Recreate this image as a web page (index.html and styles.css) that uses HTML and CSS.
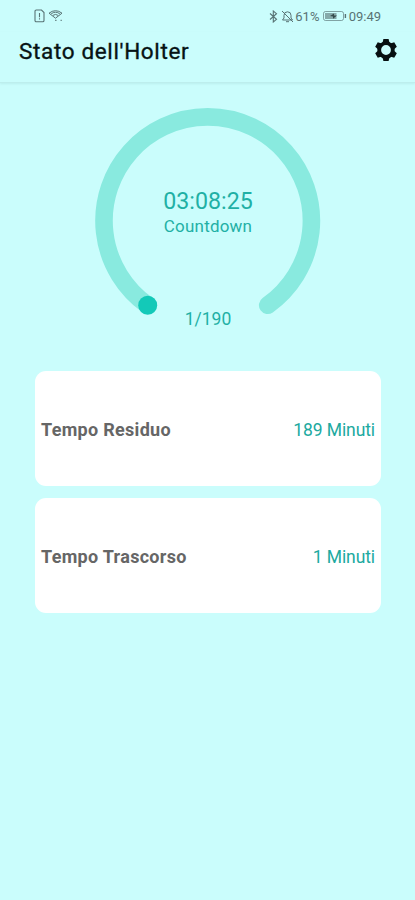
FILE: index.html
```html
<!DOCTYPE html>
<html lang="it">
<head>
<meta charset="utf-8">
<title>Stato dell'Holter</title>
<link rel="stylesheet" href="styles.css">
</head>
<body>
<div class="status">
  <svg class="sim" width="11" height="14" viewBox="0 0 11 14" fill="none" stroke="currentColor" stroke-width="1.1"><path d="M3 1h4.5L10 3.5V11.5a1.3 1.3 0 0 1-1.3 1.3H2.3A1.3 1.3 0 0 1 1 11.5V2.3A1.3 1.3 0 0 1 2.3 1z"/><path d="M5.5 4v4.2M5.5 9.3v1.3"/></svg>
  <svg class="wifi" width="16" height="14" viewBox="0 0 16 14" fill="none" stroke="currentColor" stroke-width="1"><path d="M1 4.2Q7.5-.8 14 4.2L7.5 9.2zM3.2 4.8Q7.5 1.6 11.8 4.8M4.8 6.4q2.7-1.9 5.4 0"/><path d="M7 11.3h1.6M12.5 11.3h1.4"/></svg>
  <span class="space"></span>
  <svg class="bt" width="9" height="13" viewBox="0 0 9 13" fill="none" stroke="currentColor" stroke-width="1.1"><path d="M1 3.5l6.5 5.8-3.2 2.7V1l3.2 2.7L1 9.5"/></svg>
  <svg class="bell" width="13" height="13" viewBox="0 0 13 13" fill="none" stroke="currentColor" stroke-width="1"><path d="M1.5 10h10L10 8V5.3a3.5 3.5 0 0 0-7 0V8zM5 11.7h3M1 1l11 11"/></svg>
  <span class="pct">61%</span>
  <svg class="battery" width="24" height="10" viewBox="0 0 24 10"><rect x=".5" y=".5" width="20" height="9" rx="2" fill="none" stroke="currentColor" opacity=".65"/><rect x="2" y="2" width="11.5" height="6" fill="currentColor" opacity=".6"/><path d="M7 5l4-2.5v2h3L10 7.8V5.5z" fill="#344b4c"/><path d="M22.4 3v4" stroke="currentColor" stroke-width="1.4"/></svg>
  <span class="clock">09:49</span>
</div>
<header class="bar">
  <h1>Stato dell'Holter</h1>
  <svg class="gear" width="24" height="24" viewBox="-12 -12 24 24">
    <circle r="6.8" fill="none" stroke="#071011" stroke-width="3.8"/>
    <g fill="#071011"><path id="tooth" d="M-2.6-11h5.2l.9 4h-7z"/><use href="#tooth" transform="rotate(60)"/><use href="#tooth" transform="rotate(120)"/><use href="#tooth" transform="rotate(180)"/><use href="#tooth" transform="rotate(240)"/><use href="#tooth" transform="rotate(300)"/></g>
  </svg>
</header>
<main>
  <section class="gauge">
    <svg class="ring" width="226" height="226" viewBox="0 0 226 226"><path d="M52.7 197.2A103.7 103.7 0 1 1 172.7 197.2" fill="none" stroke="#89eadf" stroke-width="17.6" stroke-linecap="round"/><circle cx="52.7" cy="197.2" r="9.5" fill="#13c9b8"/></svg>
    <div class="readout">
      <span class="time">03:08:25</span>
      <span class="label">Countdown</span>
      <span class="count">1/190</span>
    </div>
  </section>
  <section class="cards">
    <div class="card"><b>Tempo Residuo</b><span>189 Minuti</span></div>
    <div class="card"><b>Tempo Trascorso</b><span>1 Minuti</span></div>
  </section>
</main>
</body>
</html>
```
FILE: styles.css
```css
* { box-sizing: border-box; }
body {
  margin: 0;
  height: 900px;
  background: #cafdfc;
  font-family: Roboto, "Liberation Sans", sans-serif;
  overflow: hidden;
}
.status {
  display: flex;
  align-items: center;
  height: 32px;
  padding: 0 34px;
  color: #587374;
  font-size: 13px;
}
.wifi { margin-left: 3px; }
.space { flex: 1; }
.bell { margin: 0 1px 0 3px; }
.pct { letter-spacing: 0.1px; }
.battery { margin: 0 2px 0 3px; }
.bar {
  display: flex;
  align-items: center;
  justify-content: space-between;
  height: 51px;
  padding: 0 17px 14px 19px;
  border-bottom: 1px solid #bdeeed;
  box-shadow: 0 1px 2px rgba(0, 70, 70, 0.08);
}
h1 {
  margin: 0;
  padding-top: 1px;
  color: #071314;
  font-size: 22.5px;
  font-weight: 400;
  line-height: 26px;
  letter-spacing: 0.65px;
  -webkit-text-stroke: 0.35px #071314;
}
.gauge {
  display: grid;
  justify-content: center;
  padding: 25px 0 0 1px;
  height: 288px;
}
.ring, .readout { grid-area: 1 / 1; }
.readout {
  display: flex;
  flex-direction: column;
  align-items: center;
  padding-top: 80px;
  color: #1fb0a5;
}
.time { font-size: 23.2px; line-height: 27px; }
.label { font-size: 17px; line-height: 22px; letter-spacing: 0.2px; }
.count { margin-top: 71px; font-size: 17.5px; line-height: 22px; }
.cards {
  display: flex;
  flex-direction: column;
  gap: 12px;
  padding: 0 34px 0 35px;
}
.card {
  display: flex;
  align-items: center;
  justify-content: space-between;
  height: 115px;
  padding: 2px 6px 0;
  border-radius: 11px;
  background: #fff;
  font-size: 18px;
}
.card b { color: #666; font-weight: 700; letter-spacing: 0.3px; }
.card span { color: #20a99f; font-size: 17.5px; line-height: 20px; letter-spacing: -0.1px; }
```
